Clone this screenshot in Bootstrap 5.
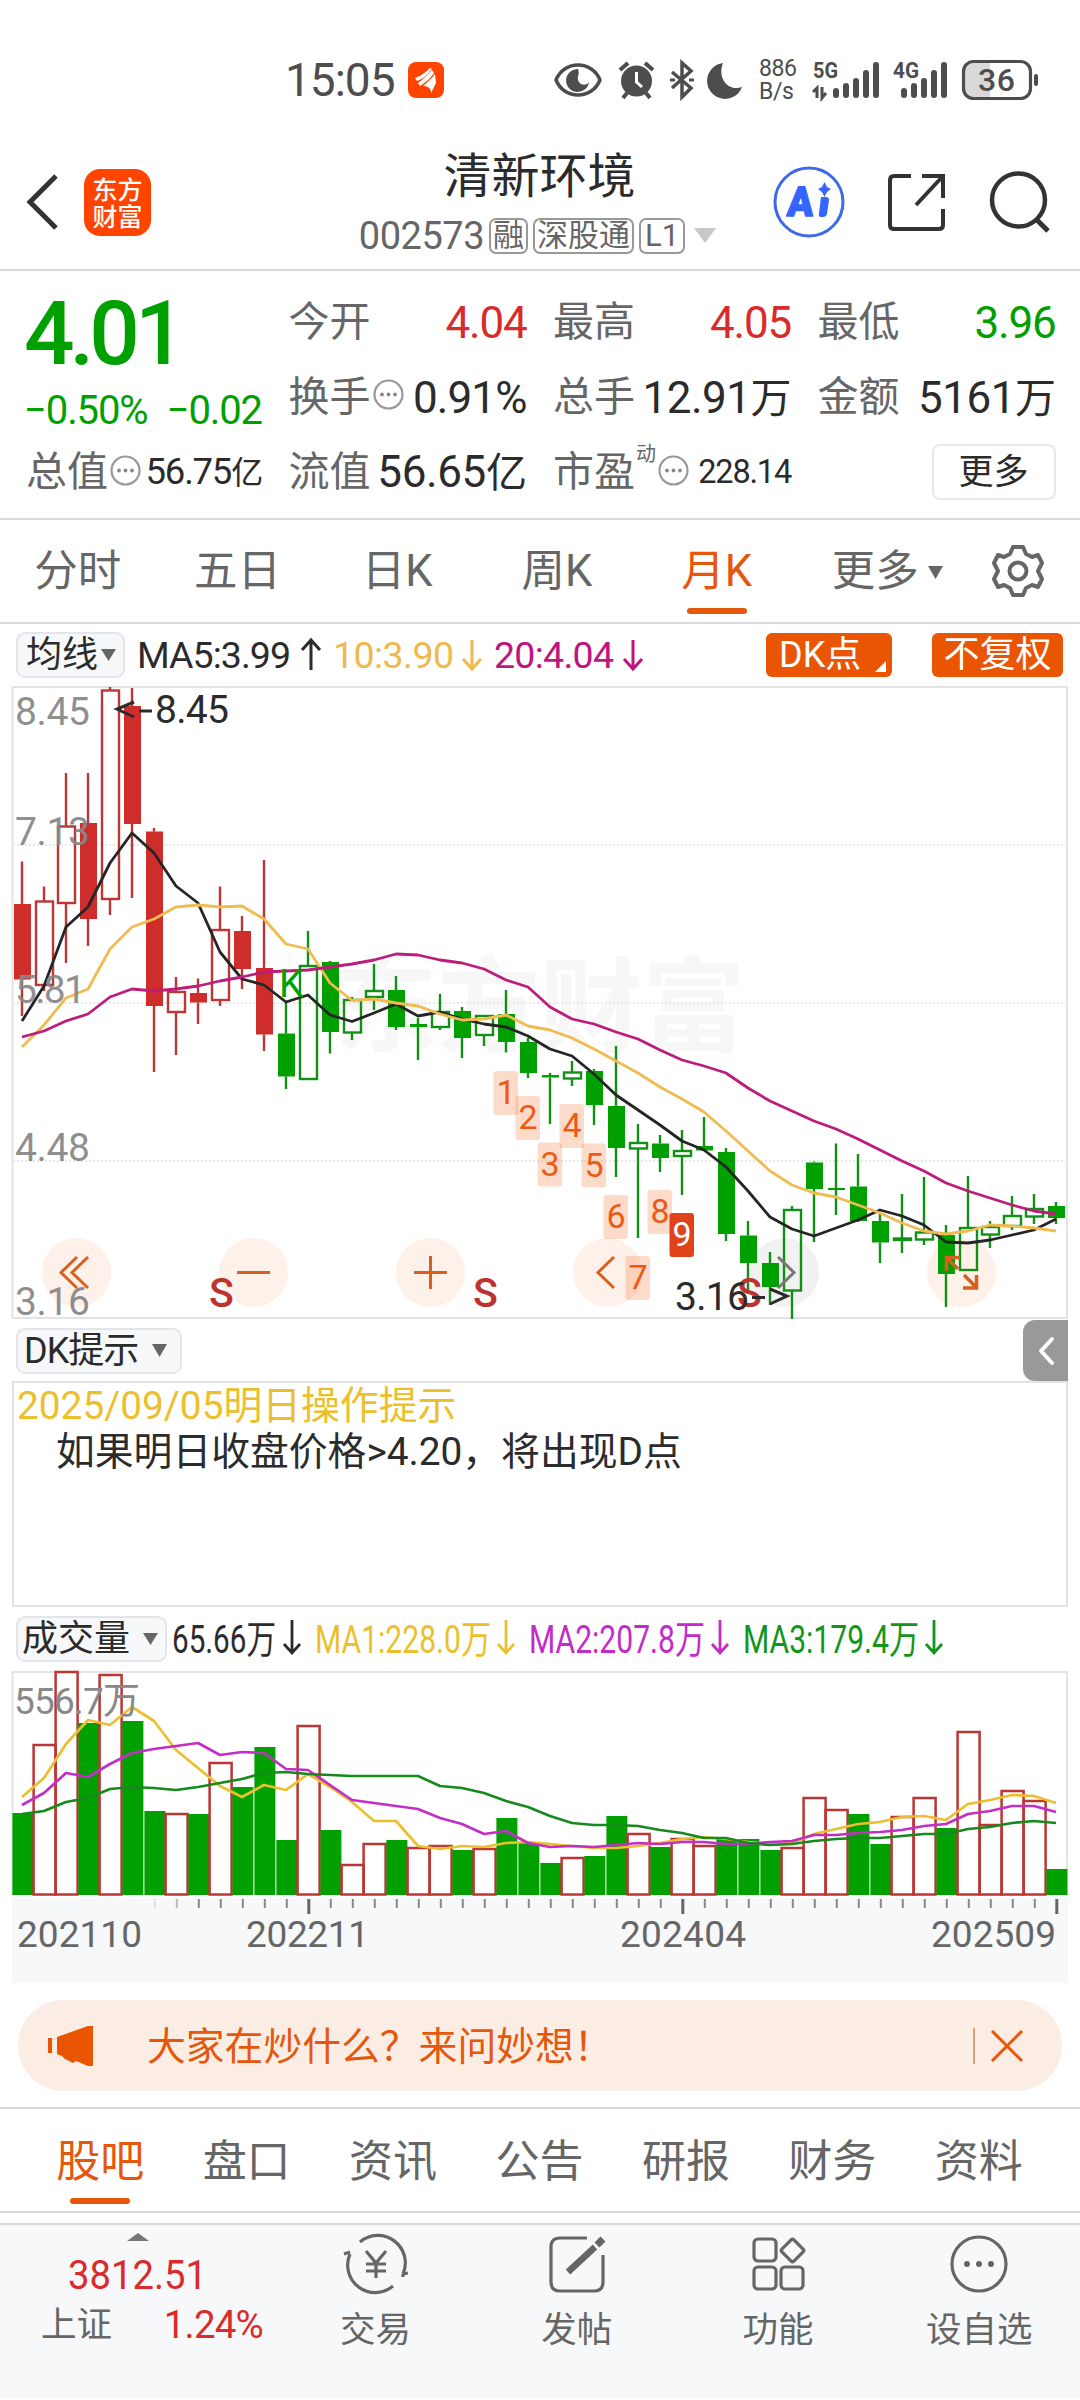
<!DOCTYPE html>
<html lang="zh-CN">
<head>
<meta charset="utf-8">
<meta name="viewport" content="width=device-width, initial-scale=1">
<title>清新环境 002573</title>
<link href="https://cdn.jsdelivr.net/npm/bootstrap@5.3.0/dist/css/bootstrap.min.css" rel="stylesheet">
<style>
:root{--ora:#e5570c;--grn:#00a000;--red:#d92b2b;--ink:#2b2b2b;--dim:#666;--rule:#d9d9d9}
body{width:1080px;height:2400px;overflow:hidden;background:#fff;color:var(--ink);font-family:Roboto,"Noto Sans CJK SC",sans-serif;line-height:1;white-space:nowrap}
svg{display:block;flex:none;overflow:visible}
svg text{font-family:Roboto,"Noto Sans CJK SC",sans-serif}
.ruled{border-bottom:2px solid var(--rule)}
.statusbar{height:141px;padding:18px 41px 0 285px;color:#4d4d4d}
.clock{font-size:46px;letter-spacing:-1px;width:123px}
.netrate{font-size:23px;line-height:23px;width:40px;letter-spacing:-.4px}
.titlebar{height:130px}
.brand{width:67px;height:67px;border-radius:16px;background:#ff4400;color:#fff;font-size:25px;line-height:27px;font-weight:500}
.stockname{font-size:48px;line-height:50px}
.code{font-size:38px;letter-spacing:-.5px;color:var(--dim)}
.tagbox{border:2px solid #999;border-radius:7px;height:36px;font-size:31px;color:var(--dim);line-height:31px;padding:0 2px}
.quote{height:249px;padding:14px 25px 0 26px;display:grid;grid-template-columns:236px 238px 238px 238px;column-gap:26.5px;grid-template-rows:75px 75px 74px}
.lbl{font-size:41px;color:var(--dim)}
.val{font-size:44px;letter-spacing:-1.2px;margin-right:0}
.cn{font-size:41px}
.up{color:var(--red)}.dn{color:var(--grn)}
.price{font-size:89px;font-weight:500;letter-spacing:-5px;height:100px;line-height:98px;margin-left:-2px}
.chg{font-size:40px;letter-spacing:-1.1px;line-height:52px;margin-left:-2px}
.morebtn{width:124px;height:56px;border:2px solid #e6e8ec;border-radius:8px;font-size:35px}
.ktabs{height:104px;font-size:43.500px;color:var(--dim)}
.ktabs>div{width:159.7px;position:relative;padding-top:2px}
.ktabs>div:first-child{margin-left:-2px}
.seltab{color:var(--ora)!important;position:relative}
.seltab::after{content:"";position:absolute;left:50%;margin-left:-30px;bottom:var(--ub,8px);width:60px;height:6px;border-radius:3px;background:var(--ora)}
.pill{height:46px;border:2px solid #e3e5ea;background:#f7f8fa;border-radius:9px;font-size:36px;padding:0 8px}
.obtn{height:44px;background:#ea5504;color:#fff;border-radius:6px;font-size:36px}
.sidebtn{width:45px;height:61px;background:#999;border-radius:12px 0 0 12px}
.tipbox{height:226px;margin:0 12px;border:2px solid #e3e3e3;font-size:38.8px;padding:0 3px}
.tipbox div{line-height:45.5px}
.ask{margin:17px 18px 0;height:91px;border-radius:46px;background:#fcede4;color:var(--ora);font-size:38.8px}
.btabs{height:106px;margin-top:16px;border-top:2px solid var(--rule);padding:0 28px 0 27px;font-size:44px;color:var(--dim);--ub:7px}
.btabs>div{padding-top:3px}
.dock{height:176px;margin-top:10px;background:#f7f8fa;border-top:2px solid var(--rule);color:var(--dim);font-size:35.5px}
.dock .slot{width:201.4px;padding-top:9px;gap:19px}
.idx{width:275px}
</style>
<script src="https://cdn.jsdelivr.net/npm/bootstrap@5.3.0/dist/js/bootstrap.bundle.min.js"></script>
</head>
<body>

<header class="statusbar d-flex align-items-center">
 <div class="clock">15:05</div>
 <svg width="36" height="36" viewBox="0 0 36 36"><rect width="36" height="36" rx="8" fill="#ff4400"/><path d="M7 16C13 14 18 10 22 6L24 7C20 12 15 17 9 19ZM10 21C16 17 20 12 24 8L26 11C23 16 18 20 12 24ZM15 24C20 20 24 16 27 12L28 21 23 31C23 26 20 24 15 24Z" fill="#fff"/></svg>
 <svg class="ms-auto" style="margin-right:16px" width="48" height="36" viewBox="0 0 48 36"><path d="M2 18C10 -2 38 -2 46 18C38 38 10 38 2 18Z" fill="none" stroke="#4d4d4d" stroke-width="3.5"/><path d="M24 7A11.5 11.5 0 1 0 35 20C33 24 26 24 24 18C23 14 26 13 24 7Z" fill="#4d4d4d"/></svg>
 <svg style="margin-right:15px" width="37" height="38" viewBox="0 0 37 38"><circle cx="18.500" cy="20" r="15.500" fill="#4d4d4d"/><path d="M2 9 10 2M35 9 27 2M9 32 5 37M28 32 32 37" stroke="#4d4d4d" stroke-width="4"/><path d="M18.500 11V21L24 26" stroke="#fff" stroke-width="3" fill="none"/></svg>
 <svg style="margin-right:14px" width="24" height="38" viewBox="0 0 24 38"><path d="M2 11 21 27 12 36V2L21 10 2 27" fill="none" stroke="#4d4d4d" stroke-width="3.5"/><path d="M0 19H5M19 19H24" stroke="#4d4d4d" stroke-width="3"/></svg>
 <svg style="margin-right:16px" width="35" height="36" viewBox="0 0 35 36"><path d="M15 1A18 18 0 1 0 34 25C20 30 9 16 15 1Z" fill="#4d4d4d"/></svg>
 <div class="netrate" style="margin-right:14px">886<br>B/s</div>
 <svg width="66" height="40" viewBox="0 0 66 40" fill="#4d4d4d"><text x="0" y="18" font-size="22" font-weight="700" textLength="25" lengthAdjust="spacingAndGlyphs">5G</text><path d="M4 38V28L0 32M9 27V38L13 33" fill="none" stroke="#4d4d4d" stroke-width="3"/><rect x="20" y="28" width="6" height="10" rx="3"/><rect x="30" y="23" width="6" height="15" rx="3"/><rect x="40" y="18" width="6" height="20" rx="3"/><rect x="50" y="10" width="6" height="28" rx="3"/><rect x="60" y="2" width="6" height="36" rx="3"/></svg>
 <svg style="margin:0 15px 0 14px" width="54" height="40" viewBox="0 0 54 40" fill="#4d4d4d"><text x="0" y="18" font-size="22" font-weight="700" textLength="26" lengthAdjust="spacingAndGlyphs">4G</text><rect x="8" y="28" width="6" height="10" rx="3"/><rect x="18" y="23" width="6" height="15" rx="3"/><rect x="28" y="18" width="6" height="20" rx="3"/><rect x="38" y="10" width="6" height="28" rx="3"/><rect x="48" y="2" width="6" height="36" rx="3"/></svg>
 <svg width="77" height="40" viewBox="0 0 77 40"><path d="M28 2H11Q2 2 2 11V29Q2 38 11 38H28Z" fill="#d9d9d9"/><rect x="1.500" y="1.500" width="67" height="37" rx="10" fill="none" stroke="#4d4d4d" stroke-width="3.200"/><rect x="72" y="14" width="4" height="12" rx="2" fill="#4d4d4d"/><text x="16" y="31" font-size="32" font-weight="500" fill="#4d4d4d" textLength="37">36</text></svg>
</header>

<nav class="titlebar ruled d-flex align-items-center">
 <svg style="margin:0 25px 6px 26px" width="33" height="56" viewBox="0 0 33 56"><path d="M30 2 4 28 30 54" fill="none" stroke="#333" stroke-width="5"/></svg>
 <div class="brand text-center pt-2" style="margin-bottom:6px">东方<br>财富</div>
 <div class="mx-auto d-flex flex-column align-items-center" style="margin-top:-4px;padding-left:155px">
  <div class="stockname">清新环境</div>
  <div class="d-flex align-items-center" style="margin-top:15px;gap:5px;margin-right:4px"><span class="code">002573</span><span class="tagbox">融</span><span class="tagbox">深股通</span><span class="tagbox px-1">L1</span>
  <svg class="ms-1" width="22" height="15"><path d="M0 0H22L11 15Z" fill="#c8c8c8"/></svg></div>
 </div>
 <div class="d-flex align-items-center" style="margin:0 29px 6px 0">
 <svg width="72" height="72" viewBox="0 0 72 72"><circle cx="36" cy="36" r="34" fill="none" stroke="#3d6ae8" stroke-width="3"/><text x="14" y="50" font-size="41" font-weight="900" fill="#3366ff" stroke="#3366ff" stroke-width="1.500" stroke-linejoin="round" textLength="26" lengthAdjust="spacingAndGlyphs" transform="skewX(-4) translate(3 0)">A</text><path d="M48 31H53Q56 31 56 34L54 48Q53 51 50 51H48Q45 51 46 47ZM51.500 16 54 21 58 23 54 26 51.500 31 49 26 45 23 49 21Z" fill="#3366ff"/></svg>
 <svg style="margin-left:42px" width="60" height="60" viewBox="0 0 60 60"><path d="M24 4H7Q3 4 3 8V53Q3 57 7 57H52Q56 57 56 53V37M35 4H56V26M56 4 29 33" fill="none" stroke="#333" stroke-width="4"/></svg>
 <svg style="margin-left:42px" width="62" height="62" viewBox="0 0 62 62"><circle cx="29.500" cy="29" r="26.500" fill="none" stroke="#333" stroke-width="4.500"/><path d="M47 48 59 60" stroke="#333" stroke-width="5"/></svg>
 </div>
</nav>

<section class="quote ruled">
 <div style="grid-row:1/3"><div class="price dn">4.01</div><div class="chg dn d-flex justify-content-between"><span>−0.50%</span><span>−0.02</span></div></div>
 <div class="d-flex align-items-center justify-content-between"><span class="lbl">今开</span><span class="val up">4.04</span></div>
 <div class="d-flex align-items-center justify-content-between"><span class="lbl">最高</span><span class="val up">4.05</span></div>
 <div class="d-flex align-items-center justify-content-between"><span class="lbl">最低</span><span class="val dn">3.96</span></div>
 <div class="d-flex align-items-center"><span class="lbl">换手</span><svg style="margin:-6px 0 0 2px" width="31" height="31"><use href="#more"/></svg><span class="val ms-auto" style="letter-spacing:-.9px">0.91%</span></div>
 <div class="d-flex align-items-center justify-content-between"><span class="lbl">总手</span><span class="val" style="letter-spacing:-.5px">12.91<span class="cn">万</span></span></div>
 <div class="d-flex align-items-center justify-content-between"><span class="lbl">金额</span><span class="val" style="letter-spacing:-.5px">5161<span class="cn">万</span></span></div>
 <div class="d-flex align-items-center"><span class="lbl">总值</span><svg style="margin:-4px 0 0 2px" width="31" height="31"><use href="#more"/></svg><span class="val ms-auto" style="font-size:36.5px">56.75<span style="font-size:32px">亿</span></span></div>
 <div class="d-flex align-items-center justify-content-between"><span class="lbl">流值</span><span class="val" style="letter-spacing:-.4px">56.65<span class="cn">亿</span></span></div>
 <div class="d-flex align-items-center"><span class="lbl">市盈</span><span class="lbl" style="font-size:20px;margin:-36px 0 0 1px">动</span><svg style="margin:-4px 0 0 2px" width="31" height="31"><use href="#more"/></svg><span class="val ms-auto" style="font-size:32.500px">228.14</span></div>
 <div class="d-flex align-items-center justify-content-end"><div class="morebtn d-flex align-items-center justify-content-center">更多</div></div>
</section>

<nav class="ktabs ruled d-flex align-items-stretch">
 <div class="d-flex align-items-center justify-content-center">分时</div>
 <div class="d-flex align-items-center justify-content-center">五日</div>
 <div class="d-flex align-items-center justify-content-center">日K</div>
 <div class="d-flex align-items-center justify-content-center">周K</div>
 <div class="d-flex align-items-center justify-content-center seltab">月K</div>
 <div class="d-flex align-items-center justify-content-center" style="padding-left:22px">更多<svg style="margin-left:9px" width="15" height="13"><path d="M0 0H15L7.500 13Z" fill="#666"/></svg></div>
 <svg class="m-auto" width="54" height="54" viewBox="-27 -27 54 54" fill="none" stroke="#666" stroke-width="4" stroke-linejoin="round"><path d="M-5-24H5L8-17 14-14 20-16 24-8 20 0 24 8 20 16 14 14 8 17 5 24H-5L-8 17-14 14-20 16-24 8-20 0-24-8-20-16-14-14-8-17Z"/><circle r="8.500"/></svg>
</nav>

<div class="d-flex align-items-center" style="height:62px;padding:0 17px 0 16px">
 <div class="pill d-flex align-items-center" style="width:109px">均线<svg style="margin-left:3px" width="15" height="12"><path d="M0 0H15L7.500 12Z" fill="#666"/></svg></div>
 <svg style="margin-left:9px" width="530" height="50" viewBox="134 630 530 50" font-size="37.500"><text x="137" y="668" fill="#2b2b2b" textLength="154">MA5:3.99</text><text x="333" y="668" fill="#f0b94c" textLength="121">10:3.90</text><text x="494" y="668" fill="#c0157d" textLength="120">20:4.04</text><g fill="none" stroke-width="3"><path d="M311 670V641M302 650 311 640 320 650" stroke="#2b2b2b"/><path d="M472 640V669M463 659 472 669 481 659" stroke="#f0b94c"/><path d="M633 640V669M624 659 633 669 642 659" stroke="#c0157d"/></g></svg>
 <div class="obtn d-flex align-items-center ms-auto" style="width:126px;padding-left:13px;margin-right:40px">DK点<svg class="ms-auto align-self-end" style="margin:0 6px 5px 0" width="11" height="11"><path d="M11 0V11H0Z" fill="#fff"/></svg></div>
 <div class="obtn d-flex align-items-center justify-content-center" style="width:131px">不复权</div>
</div>

<svg id="kline" width="1080" height="634" viewBox="0 686 1080 634">
 <defs><symbol id="more" viewBox="0 0 31 31"><circle cx="15.500" cy="15.500" r="14" fill="none" stroke="#999" stroke-width="2.200"/><g fill="#888"><circle cx="9" cy="15.500" r="1.900"/><circle cx="15.500" cy="15.500" r="1.900"/><circle cx="22" cy="15.500" r="1.900"/></g></symbol></defs>
 <text x="335" y="1044" font-size="103" font-weight="700" fill="#f7f7f7" textLength="410">东方财富</text>
 <rect x="12.500" y="687" width="1054.500" height="631" fill="none" stroke="#e3e3e3" stroke-width="2"/>
 <path d="M13 845H1067M13 1003H1067M13 1161H1067" stroke="#e8e8e8" stroke-width="2" stroke-dasharray="2 2"/>
 <g fill="#fef1ea"><circle cx="76.500" cy="1272.500" r="34.500"/><circle cx="253.500" cy="1272.500" r="34.500"/><circle cx="430.500" cy="1272.500" r="34.500"/><circle cx="607.500" cy="1272.500" r="34.500"/><circle cx="784.500" cy="1272.500" r="34.500" fill="#f1f1f1"/><circle cx="961.500" cy="1272.500" r="34.500"/></g>
 <g id="candles"></g>
 <g id="klines" fill="none" stroke-width="2.800" stroke-linejoin="round"></g>
 <g font-size="39" fill="#888" fill-opacity=".95"><text x="15" y="725" textLength="75">8.45</text><text x="15" y="845" textLength="75">7.13</text><text x="15" y="1003" textLength="71">5.81</text><text x="15" y="1161" textLength="75">4.48</text><text x="15" y="1315" textLength="75">3.16</text></g>
 <g fill="none" stroke="#d9601c" stroke-width="3"><path d="M77 1257 61 1272.500 77 1288M88 1257 72 1272.500 88 1288M237 1272.500H270M414 1272.500H447M430.500 1256V1289M614 1257 598 1272.500 614 1288"/><path d="M778 1257 794 1272.500 778 1288" stroke="#777"/><path d="M946.500 1271V1257.500H960M947 1258 958 1269M964 1275 976 1287M976.500 1275V1288H963" stroke-width="3.500"/></g>
 <g font-size="41" font-weight="500" fill="#c0322f"><text x="209" y="1307">S</text><text x="473" y="1307">S</text><text x="737" y="1307">S</text></g>
 <text x="279" y="997" font-size="39" fill="#00a000">K</text>
 <g font-size="39" fill="#2b2b2b"><text x="155" y="723" textLength="74">8.45</text><text x="675" y="1310" textLength="74">3.16</text><path d="M134 702 117 709 134 717M139 711H152M752 1297.500H765M770 1289 787 1296 770 1304" fill="none" stroke="#2b2b2b" stroke-width="3"/></g>
 <g id="marks" font-size="34" text-anchor="middle"></g>
</svg>

<div class="d-flex align-items-center" style="height:61px;padding:0 12px 0 16px">
 <div class="pill d-flex align-items-center" style="width:166px;padding-left:6px;letter-spacing:-1px">DK提示<svg style="margin-left:14px" width="15" height="13"><path d="M0 0H15L7.500 13Z" fill="#666"/></svg></div>
 <div class="sidebtn ms-auto d-flex align-items-center justify-content-center"><svg width="18" height="30" viewBox="0 0 18 30"><path d="M15 3 4 15 15 27" fill="none" stroke="#fff" stroke-width="4" stroke-linecap="round" stroke-linejoin="round"/></svg></div>
</div>
<div class="tipbox"><div style="color:#ebc02c">2025/09/05明日操作提示</div><div style="padding-left:39px">如果明日收盘价格&gt;4.20，将出现D点</div></div>

<div class="d-flex align-items-center" style="height:64px;padding:0 16px">
 <div class="pill d-flex align-items-center" style="width:151px;padding-left:4px">成交量<svg style="margin-left:13px" width="15" height="12"><path d="M0 0H15L7.500 12Z" fill="#666"/></svg></div>
 <svg width="800" height="50" viewBox="167 1615 800 50"><g style="font-size:39px"><text x="172" y="1654" fill="#2b2b2b" textLength="104" lengthAdjust="spacingAndGlyphs">65.66万</text><text x="315" y="1654" fill="#ebc02c" textLength="176" lengthAdjust="spacingAndGlyphs">MA1:228.0万</text><text x="529" y="1654" fill="#c32bc8" textLength="176" lengthAdjust="spacingAndGlyphs">MA2:207.8万</text><text x="743" y="1654" fill="#12951a" textLength="176" lengthAdjust="spacingAndGlyphs">MA3:179.4万</text></g><g fill="none" stroke-width="2.800"><path d="M292 1621V1654M284 1645 292 1654 300 1645" stroke="#2b2b2b"/><path d="M506 1621V1654M498 1645 506 1654 514 1645" stroke="#ebc02c"/><path d="M720 1621V1654M712 1645 720 1654 728 1645" stroke="#c32bc8"/><path d="M934 1621V1654M926 1645 934 1654 942 1645" stroke="#12951a"/></g></svg>
</div>

<svg id="volume" width="1080" height="312" viewBox="0 1671 1080 312">
 <rect x="12" y="1898" width="1056" height="85" fill="#f7f8fa"/>
 <path d="M12.500 1896V1672H1067V1896" fill="none" stroke="#e3e3e3" stroke-width="2"/>
 <g id="bars"></g><g id="vlines" fill="none" stroke-width="2.700" stroke-linejoin="round"></g><g id="ticks"></g>
 <text x="14" y="1714" font-size="37" fill="#888" textLength="126">556.7万</text>
 <g font-size="37" fill="#666"><text x="17" y="1947" textLength="125">202110</text><text x="246" y="1947" textLength="123">202211</text><text x="620" y="1947" textLength="126">202404</text><text x="931" y="1947" textLength="125">202509</text></g>
</svg>

<div class="ask d-flex align-items-center">
 <svg style="margin:0 54px 0 30px" width="45" height="42" viewBox="0 0 45 42" fill="#ea5504"><path d="M0 13H4V28H0ZM9 12 40 1H45V41H40L28 36 25 38 17 34 14 31 9 29Z"/></svg>
 <span class="pt-1">大家在炒什么？来问妙想！</span>
 <svg class="ms-auto" style="margin-right:39px" width="50" height="36" viewBox="0 0 50 36" fill="none" stroke="#ea5504"><path d="M1 0V36" stroke-width="1.500" stroke="#d9855a"/><path d="M19 3 49 33M49 3 19 33" stroke-width="3"/></svg>
</div>

<nav class="btabs ruled d-flex align-items-stretch">
 <div class="seltab flex-fill d-flex align-items-center justify-content-center">股吧</div>
 <div class="flex-fill d-flex align-items-center justify-content-center">盘口</div>
 <div class="flex-fill d-flex align-items-center justify-content-center">资讯</div>
 <div class="flex-fill d-flex align-items-center justify-content-center">公告</div>
 <div class="flex-fill d-flex align-items-center justify-content-center">研报</div>
 <div class="flex-fill d-flex align-items-center justify-content-center">财务</div>
 <div class="flex-fill d-flex align-items-center justify-content-center">资料</div>
</nav>

<footer class="dock d-flex">
 <div class="idx d-flex flex-column align-items-center pt-2">
  <svg width="22" height="8" viewBox="0 0 22 8"><path d="M0 8 11 0 22 8Z" fill="#777"/></svg>
  <svg style="margin-top:12px" width="275" height="40"><text x="68" y="36" font-size="40" fill="#d92b2b" textLength="139" lengthAdjust="spacingAndGlyphs">3812.51</text></svg>
  <div class="d-flex align-self-stretch justify-content-between" style="padding:13px 12px 0 41px"><span style="padding-top:2px">上证</span><span class="up" style="font-size:38.500px;letter-spacing:-.8px">1.24%</span></div>
 </div>
 <div class="slot d-flex flex-column align-items-center"><svg width="66" height="60" viewBox="-33 -30 66 60" fill="none" stroke="#666" stroke-width="3.200"><path d="M-16-22A27.500 27.500 0 0 1 27 10M27 10 32 9M27 10V13M17 22A27.500 27.500 0 0 1-26-10M-26-12-32-10"/><path d="M-10-13 0-1 10-13M0-1V14M-10 0H10M-10 7H10"/></svg><span>交易</span></div>
 <div class="slot d-flex flex-column align-items-center"><svg width="60" height="60" viewBox="-30 -30 60 60" fill="none" stroke="#666" stroke-width="3.200"><path d="M10-26H-17Q-26-26-26-17V18Q-26 27-17 27H17Q26 27 26 18V-9"/><path d="M18-17-9 8" stroke-width="6.500"/><path d="M20-19 26-25" stroke-width="7"/></svg><span>发帖</span></div>
 <div class="slot d-flex flex-column align-items-center"><svg width="60" height="60" viewBox="-30 -30 60 60" fill="none" stroke="#666" stroke-width="3.200"><rect x="-24" y="-25" width="22" height="22" rx="4"/><rect x="-24" y="3" width="22" height="22" rx="4"/><rect x="3" y="3" width="22" height="22" rx="4"/><rect x="6" y="-22" width="17" height="17" rx="2" transform="rotate(45 14.500 -13.500)"/></svg><span>功能</span></div>
 <div class="slot d-flex flex-column align-items-center"><svg width="60" height="60" viewBox="-30 -30 60 60"><circle r="27" fill="none" stroke="#666" stroke-width="3.200"/><g fill="#666"><circle cx="-12" r="3"/><circle r="3"/><circle cx="12" r="3"/></g></svg><span>设自选</span></div>
</footer>

<script>
const GREEN='#00a000',RED='#cf2d2b',LINE_RED='#bb3634',LINE_GREEN='#129016';
const cx=i=>22+22*i, put=(id,html)=>document.getElementById(id).innerHTML=html;
// kind (upper case = filled body, lower = hollow), high, body top, body bottom, low
const candles=[['R',861.5,904,979.5,1016],['r',886.5,901.5,985,991],['r',773,826.5,903,963],['R',773,823,919,946],['r',687,690.5,899,915],['R',688,706,824,898],['R',828,831.5,1006,1072],['r',977,992,1012,1055],['R',978.5,993,1002.5,1024],['r',886.5,930,1000,1006],['R',916,931,969,989],['R',860,968,1034.5,1051],['G',1002,1033.5,1076.5,1089],['g',931,966,1079,1079],['G',961,962,1032,1053.5],['g',997,1000,1032.5,1040],['g',964,991,997,1010],['G',976,990,1027,1030],['G',1018,1024,1027,1060],['g',994,1012,1027,1030],['G',1007,1011,1038,1058],['g',1015,1016,1035,1046],['G',990,1014,1042,1052.5],['G',1038,1042,1073,1078],['G',1073,1075,1077.5,1124],['g',1061,1072.5,1078.5,1086],['G',1069,1071,1105,1125],['G',1046,1106,1148,1177],['g',1124,1143,1148.5,1238],['G',1135,1143.5,1158,1172],['g',1130,1151,1156,1195],['G',1117,1146,1150.5,1150.5],['G',1148,1152,1234,1241],['G',1221,1235.5,1263,1290],['G',1252,1263,1287,1305],['g',1206,1210,1290.5,1319],['G',1161.5,1162.5,1189,1242],['G',1143.5,1188,1190,1215],['G',1154,1186.5,1221,1222],['G',1214,1221,1242.5,1263],['g',1194,1238.5,1240,1253],['g',1177,1232.5,1239.5,1245],['G',1225,1235,1274,1307],['g',1176,1228,1270,1271],['g',1221,1227,1234.5,1248],['g',1196,1216,1226,1230],['g',1194,1209,1216.5,1224],['G',1202,1206,1218,1224]];
put('candles',candles.map(([k,h,t,b,l],i)=>{
 const x=cx(i),red=k.toLowerCase()=='r',c=red?LINE_RED:LINE_GREEN,solid=k==k.toUpperCase();
 return `<path d="M${x} ${h}V${t}M${x} ${b}V${l}" stroke="${c}" stroke-width="2.4"/>`+(solid?`<rect x="${x-8}" y="${t}" width="17" height="${b-t}" fill="${red?RED:GREEN}"/>`:`<rect x="${x-8}" y="${t}" width="17" height="${b-t}" fill="none" stroke="${c}" stroke-width="2.4"/>`);
}).join(''));
const line=(a,c)=>`<polyline points="${a.map((y,i)=>cx(i)+','+y).join(' ')}" stroke="${c}"/>`;
put('klines',
line([1021,986,927,907,863,833,853,886,903,952,979,985,1002,995,1015,1021.5,1013,1004,1016,1012,1019,1024,1027,1036,1049,1056,1074,1095,1110,1125,1141,1150,1167,1191,1217,1229,1236,1228,1220,1210,1216,1225,1242,1243,1240,1235,1230,1219],'#252525')+
line([1047,1025,998,989,949,927,919,907,905,907,906,919,944,949,983,1000.5,999,1003,1006,1014,1020,1019,1015,1026,1030,1038,1049,1061,1073,1087,1099,1112,1131,1151,1171,1185,1193,1197,1205,1213,1223,1231,1234,1231,1225,1226,1228,1231],'#f0bb50')+
line([1037,1031,1021,1014,997,989,991,989,986,981,977,972,971,970,967,964,960,954,955,960,963,969,980,987,1007,1019,1024,1032,1039,1050,1060,1066,1073,1088,1101,1111,1121,1129,1139,1150,1161,1171,1183,1191,1198,1205,1211,1214],'#bd1c7c'));
put('marks',[1071,1096,1142.5,1104,1143.5,1195,1256,1190,1213].map((y,n)=>`<rect x="${493.5+22*n}" y="${y}" width="24.5" height="44" rx="3" fill="${n==8?'#e0431a':'#f55a14'}" fill-opacity="${n==8?1:.22}"/><text x="${506+22*n}" y="${y+33}" fill="${n==8?'#fff':'#ee5a14'}">${n+1}</text>`).join(''));

const vols='G1813 r1745 r1672 G1723 r1675 G1721 G1811 r1814 G1814 r1763 G1787 G1747 G1840 r1726 G1830 r1865 r1844 G1840 r1848 r1846 G1850 r1849 G1818 G1843 G1863 r1858 G1856 G1816 r1834 G1847 r1839 r1846 G1839 G1839 G1850 r1848 r1798 r1810 G1814 G1844 r1817 r1798 G1828 r1732 r1825 r1791 r1801 G1869'.split(' ');
put('bars',vols.map((v,i)=>{const y=+v.slice(1),x=cx(i);
 return v[0]=='G'?`<rect x="${x-9.6}" y="${y}" width="21" height="${1895-y}" fill="${GREEN}"/>`:`<rect x="${x+.6-11}" y="${y}" width="22" height="${1894.500-y}" fill="none" stroke="${LINE_RED}" stroke-width="2.5"/>`}).join(''));
put('vlines',
line([1797,1778,1744,1720,1725,1707,1721,1750,1768,1786,1797,1785,1790,1774,1787,1802,1821,1821,1846,1849,1846,1847,1843,1842,1844,1846,1848,1848,1846,1843,1839,1837,1839,1842,1844,1843,1834,1829,1824,1822,1817,1816,1820,1804,1800,1795,1796,1803],'#ebbf2e')+
line([1805,1793,1773,1777,1764,1753,1749,1746,1743,1755,1752,1753,1769,1770,1785,1800,1803,1806,1809,1818,1824,1834,1831,1843,1847,1846,1847,1845,1843,1844,1842,1842,1844,1844,1842,1841,1835,1835,1833,1832,1830,1826,1824,1814,1811,1806,1806,1812],'#c22fc6')+
line([1814,1811,1802,1798,1789,1787,1788,1790,1787,1783,1779,1773,1772,1774,1775,1776,1776,1776,1776,1786,1788,1793,1801,1807,1816,1823,1825,1825,1826,1830,1833,1838,1838,1843,1845,1844,1841,1839,1838,1838,1836,1834,1834,1829,1827,1823,1821,1823],'#168a1c'));
let t='';for(let i=6;i<48;i++){const major=[13,30,47].includes(i);t+=`<path d="M${cx(i)+.8} 1899V${major?1914:1908}" stroke="${major?'#666':i==6?'#ddd':i==7?'#bbb':'#888'}" stroke-width="${major?3:2}"/>`}
put('ticks',t);
</script>
</body>
</html>
